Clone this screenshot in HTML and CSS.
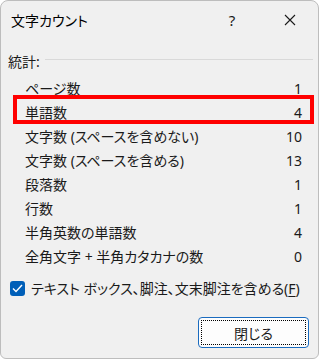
FILE: index.html
```html
<!DOCTYPE html>
<html lang="ja">
<head>
    <meta charset="UTF-8">
    <meta name="viewport" content="width=device-width, initial-scale=1.0">
    <title>文字カウント</title>
    <link rel="stylesheet" href="styles.css">
</head>
<body>
    <div class="window">
        <div class="titlebar">
            <div class="title">文字カウント</div>
            <div class="title-btn help">?</div>
            <div class="title-btn close">
                <svg width="12" height="12" viewBox="0 0 12 12">
                    <path d="M1 1 L11 11 M11 1 L1 11" stroke="#1a1a1a" stroke-width="1.1" fill="none"/>
                </svg>
            </div>
        </div>

        <div class="group-title">統計:</div>
        <div class="stats">
            <div class="row"><span>ページ数</span><span>1</span></div>
            <div class="row marked"><span>単語数</span><span>4</span></div>
            <div class="row"><span>文字数 (スペースを含めない)</span><span>10</span></div>
            <div class="row"><span>文字数 (スペースを含める)</span><span>13</span></div>
            <div class="row"><span>段落数</span><span>1</span></div>
            <div class="row"><span>行数</span><span>1</span></div>
            <div class="row"><span>半角英数の単語数</span><span>4</span></div>
            <div class="row"><span>全角文字 + 半角カタカナの数</span><span>0</span></div>
        </div>

        <label class="check">
            <span class="box">
                <svg width="11" height="9" viewBox="0 0 11 9">
                    <path d="M1 4.5 L4 7.5 L10 1" stroke="#fff" stroke-width="1.4" fill="none"/>
                </svg>
            </span>
            <span>テキスト ボックス、脚注、文末脚注を含める(<u>F</u>)</span>
        </label>

        <div class="footer">
            <button class="close-btn"><span class="focus">閉じる</span></button>
        </div>
    </div>
</body>
</html>
```
FILE: styles.css
```css
body {
    margin: 0;
    background: #ffffff;
    font-family: "Noto Sans", "Noto Sans CJK JP", sans-serif;
    font-size: 14px;
    color: #1a1a1a;
    font-feature-settings: "palt";
}
.window {
    width: 319px;
    height: 359px;
    box-sizing: border-box;
    border: 1px solid #bdbdbd;
    border-radius: 8px 8px 6px 6px;
    background: #f0f0f0;
}
.titlebar {
    display: flex;
    align-items: center;
    height: 38px;
}
.title {
    flex: 1;
    padding-left: 10px;
    font-size: 14px;
    color: #000;
}
.title-btn {
    width: 46px;
    height: 38px;
    display: flex;
    align-items: center;
    justify-content: center;
}
.help {
    font-size: 15px;
    margin-right: 12px;
}
.close {
    margin-right: 5px;
}
.group-title {
    display: flex;
    align-items: center;
    height: 20px;
    margin-top: 12px;
    padding: 0 5px 0 7px;
}
.group-title::after {
    content: "";
    flex: 1;
    height: 1px;
    margin-left: 5px;
    margin-top: -3px;
    background: #d9d9d9;
}
.stats {
    margin-top: 5px;
}
.row {
    display: flex;
    justify-content: space-between;
    align-items: center;
    height: 24px;
    padding: 0 16px 0 24px;
}
.marked {
    position: relative;
}
.marked::after {
    content: "";
    position: absolute;
    left: 12px;
    right: 4px;
    top: -5px;
    bottom: 0;
    border: 4px solid #ff0000;
}
.check {
    display: flex;
    align-items: center;
    gap: 6px;
    height: 20px;
    margin-top: 10px;
    padding-left: 9px;
}
.check u {
    text-underline-offset: 2px;
}
.box {
    width: 15px;
    height: 15px;
    border-radius: 3px;
    background: #005fb8;
    display: flex;
    align-items: center;
    justify-content: center;
}
.footer {
    display: flex;
    justify-content: flex-end;
    margin-top: 19px;
    padding-right: 9px;
}
.close-btn {
    width: 111px;
    height: 31px;
    padding: 2px;
    background: #fdfdfd;
    border: 1px solid #1a6bbf;
    border-radius: 4px;
    font-family: inherit;
    font-size: 14px;
    color: #1a1a1a;
    font-feature-settings: "palt";
}
.focus {
    display: flex;
    align-items: center;
    justify-content: center;
    height: 100%;
    box-sizing: border-box;
    border: 1px dotted #000;
}
```
